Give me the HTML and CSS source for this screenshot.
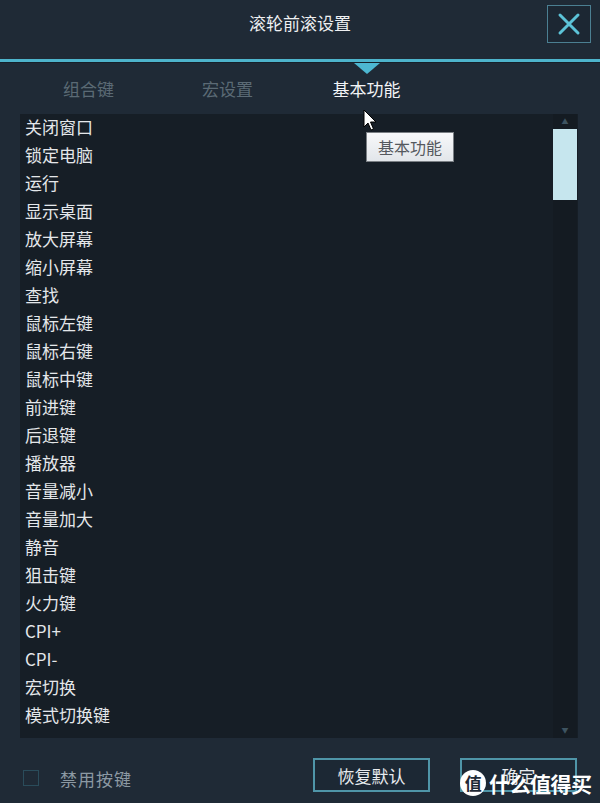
FILE: index.html
```html
<!DOCTYPE html>
<html lang="zh-CN">
<head>
    <meta charset="UTF-8">
    <meta name="viewport" content="width=device-width, initial-scale=1.0">
    <title>滚轮前滚设置</title>
    <link rel="stylesheet" href="styles.css">
</head>
<body>
    <div class="window">
        <div class="titlebar">
            <span></span>
            <div class="title">滚轮前滚设置</div>
            <button class="close">
                <svg width="24" height="24" viewBox="0 0 24 24">
                    <path d="M3 3 L21 21 M21 3 L3 21" stroke="#5cc3d8" stroke-width="3" stroke-linecap="round"/>
                </svg>
            </button>
        </div>
        <div class="accent-line"></div>

        <div class="tabs">
            <div class="tab">组合键</div>
            <div class="tab">宏设置</div>
            <div class="tab active">基本功能</div>
        </div>

        <div class="listbox">
            <ul class="items">
                <li>关闭窗口</li>
                <li>锁定电脑</li>
                <li>运行</li>
                <li>显示桌面</li>
                <li>放大屏幕</li>
                <li>缩小屏幕</li>
                <li>查找</li>
                <li>鼠标左键</li>
                <li>鼠标右键</li>
                <li>鼠标中键</li>
                <li>前进键</li>
                <li>后退键</li>
                <li>播放器</li>
                <li>音量减小</li>
                <li>音量加大</li>
                <li>静音</li>
                <li>狙击键</li>
                <li>火力键</li>
                <li>CPI+</li>
                <li>CPI-</li>
                <li>宏切换</li>
                <li>模式切换键</li>
            </ul>
            <div class="scrollbar">
                <div class="arrow">&#9650;</div>
                <div class="thumb"></div>
                <div class="track"></div>
                <div class="arrow">&#9660;</div>
            </div>
        </div>

        <div class="footer">
            <label class="check"><span class="box"></span>禁用按键</label>
            <div class="buttons">
                <button class="btn">恢复默认</button>
                <button class="btn">确定</button>
            </div>
        </div>
    </div>

    <!-- 鼠标指针和提示 -->
    <svg class="cursor" width="14" height="24" viewBox="0 0 14 24">
        <path d="M1 1 L1 18 L5 14 L8 21 L10.5 20 L7.5 13 L13 13 Z" fill="#fff" stroke="#000" stroke-width="1"/>
    </svg>
    <div class="tooltip">基本功能</div>

    <!-- 水印 -->
    <div class="watermark"><span class="wm-logo">值</span>什么值得买</div>
</body>
</html>
```

FILE: styles.css
```css
body {
    margin: 0;
    background: #1f2a36;
    font-family: "Noto Sans CJK SC", "Noto Sans", sans-serif;
    color: #e6e9ec;
    width: 600px;
    height: 803px;
    overflow: hidden;
    position: relative;
}

.window {
    display: flex;
    flex-direction: column;
    height: 803px;
}

.titlebar {
    display: grid;
    grid-template-columns: 1fr auto 1fr;
    align-items: start;
    height: 59px;
}

.title {
    font-size: 17px;
    line-height: 20px;
    padding-top: 13px;
    color: #eef0f2;
}

.close {
    justify-self: end;
    margin: 5px 9px 0 0;
    width: 44px;
    height: 38px;
    background: #1c2733;
    border: 1px solid #4b7f92;
    display: flex;
    align-items: center;
    justify-content: center;
    padding: 0;
}

.accent-line {
    height: 3px;
    background: #4db4cc;
    border-bottom: 1px solid #16202a;
}

.tabs {
    display: flex;
    height: 51px;
    padding-left: 19px;
    align-items: center;
}

.tab {
    width: 139px;
    text-align: center;
    font-size: 17px;
    color: #5b6a75;
    position: relative;
}

.tab.active {
    color: #f2f4f6;
}

.tab.active::before {
    content: "";
    position: absolute;
    left: 57px;
    top: -13px;
    border-left: 13px solid transparent;
    border-right: 13px solid transparent;
    border-top: 11px solid #4db8d2;
}

.listbox {
    display: flex;
    margin: 0 22px 0 20px;
    height: 624px;
    background: #161e26;
}

.items {
    flex: 1;
    list-style: none;
    margin: 0;
    padding: 0 0 0 5px;
}

.items li {
    height: 28px;
    line-height: 26px;
    font-size: 17px;
    color: #e4e7ea;
}

.scrollbar {
    width: 24px;
    margin-right: 1px;
    display: flex;
    flex-direction: column;
    background: #141b22;
}

.arrow {
    height: 15px;
    font-size: 7px;
    line-height: 15px;
    text-align: center;
    color: #3d5360;
}

.thumb {
    height: 71px;
    background: #c6e6ee;
}

.track {
    flex: 1;
}

.footer {
    display: flex;
    align-items: center;
    justify-content: space-between;
    padding: 20px 23px 0 23px;
}

.check {
    display: flex;
    align-items: center;
    font-size: 17px;
    color: #8c99a3;
    letter-spacing: 1px;
    margin-top: 6px;
}

.check .box {
    width: 14px;
    height: 14px;
    border: 1px solid #2a4c5b;
    margin-right: 21px;
}

.buttons {
    display: flex;
    gap: 30px;
}

.btn {
    width: 117px;
    height: 34px;
    background: #1c2834;
    border: 2px solid #4f95a8;
    color: #e8ebee;
    font-family: "Noto Sans CJK SC", sans-serif;
    font-size: 17px;
    padding: 0;
}

.cursor {
    position: absolute;
    left: 363px;
    top: 109px;
}

.tooltip {
    position: absolute;
    left: 366px;
    top: 132px;
    width: 86px;
    height: 28px;
    border: 1px solid #7a7f84;
    background: linear-gradient(#f7f8fa, #e2e6ea);
    color: #55595e;
    font-size: 16px;
    line-height: 28px;
    text-align: center;
}

.watermark {
    position: absolute;
    left: 460px;
    top: 768px;
    display: flex;
    align-items: center;
    font-size: 21px;
    font-weight: bold;
    color: #fff;
    letter-spacing: -0.5px;
}

.wm-logo {
    width: 26px;
    height: 26px;
    border-radius: 50%;
    background: #fff;
    color: #1f2a36;
    font-size: 17px;
    line-height: 26px;
    text-align: center;
    margin-right: 3px;
}
```
